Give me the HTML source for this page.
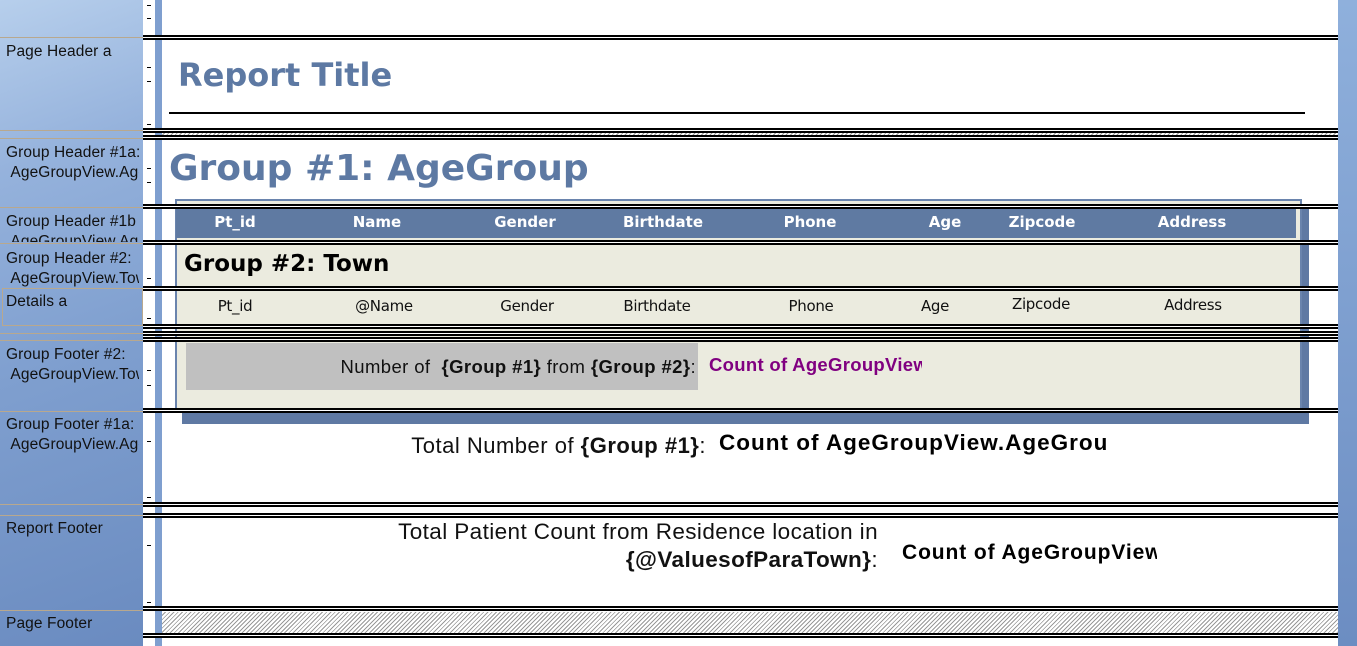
<!DOCTYPE html>
<html><head><meta charset="utf-8"><style>
*{margin:0;padding:0;box-sizing:border-box}
body{width:1357px;height:646px;overflow:hidden;position:relative;background:#fff;font-family:"Liberation Sans",sans-serif}
.a{position:absolute}
.left{left:0;top:0;width:143px;height:646px;background:linear-gradient(160deg,#b7cfec 0%,#95b2dc 25%,#7f9fcf 55%,#6a8bc0 100%)}
.lbl{position:absolute;left:6px;font-size:15.5px;color:#111;white-space:nowrap;width:133px;overflow:hidden;line-height:20px;font-family:"Liberation Sans",sans-serif;letter-spacing:0.1px}
.ld{position:absolute;left:0;width:143px;height:1px;background:#b8a88e}
.ruler{left:143px;top:0;width:12px;height:646px;background:#fff}
.strip{left:155px;top:0;width:7px;height:646px;background:#7f9fcf}
.rb{left:1338px;top:0;width:19px;height:646px;background:linear-gradient(#8fb0dc,#6c8dc2)}
.sep{position:absolute;left:143px;width:1195px;height:5px;border-top:2px solid #000;border-bottom:2px solid #000;background:#fff}
.v{font-family:"DejaVu Sans",sans-serif}
.hd{position:absolute;top:213px;color:#fff;font-weight:bold;font-size:15px;font-family:"DejaVu Sans",sans-serif;text-align:center}
.dt{position:absolute;top:297px;color:#111;font-size:15px;font-family:"DejaVu Sans",sans-serif;text-align:center;letter-spacing:-0.3px}
.hatch{background:repeating-linear-gradient(135deg,#fff 0 2px,#999 2px 3px)}
.tk{position:absolute;left:147px;width:4px;height:1px;background:#000}
</style></head><body>
<div class="a left"></div>
<div class="ld" style="top:37px"></div>
<div class="lbl" style="top:42px">Page Header a</div>
<div class="ld" style="top:130px"></div><div class="ld" style="top:138px"></div>
<div class="lbl" style="top:143px">Group Header #1a:<br>&nbsp;AgeGroupView.AgeGroup</div>
<div class="ld" style="top:207px"></div>
<div class="lbl" style="top:212px;height:30px">Group Header #1b<br>&nbsp;AgeGroupView.Ag</div>
<div class="ld" style="top:243px"></div>
<div class="lbl" style="top:249px;height:39px">Group Header #2:<br>&nbsp;AgeGroupView.Town</div>
<div class="a" style="left:2px;top:288px;width:141px;height:38px;border:1px solid #b8a88e"></div>
<div class="lbl" style="top:292px">Details a</div>
<div class="ld" style="top:333px"></div><div class="ld" style="top:340px"></div>
<div class="lbl" style="top:345px">Group Footer #2:<br>&nbsp;AgeGroupView.Town</div>
<div class="ld" style="top:411px"></div>
<div class="lbl" style="top:415px">Group Footer #1a:<br>&nbsp;AgeGroupView.AgeGroup</div>
<div class="ld" style="top:504px"></div><div class="ld" style="top:515px"></div>
<div class="lbl" style="top:519px">Report Footer</div>
<div class="ld" style="top:610px"></div>
<div class="lbl" style="top:614px">Page Footer</div>

<div class="a ruler"></div>
<div class="a strip"></div>
<div class="a rb"></div>
<div class="tk" style="top:5px"></div><div class="tk" style="top:18px"></div>
<div class="tk" style="top:67px"></div><div class="tk" style="top:81px"></div><div class="tk" style="top:124px"></div>
<div class="tk" style="top:168px"></div><div class="tk" style="top:182px"></div>
<div class="tk" style="top:244px"></div><div class="tk" style="top:278px"></div>
<div class="tk" style="top:318px"></div><div class="tk" style="top:370px"></div><div class="tk" style="top:385px"></div>
<div class="tk" style="top:441px"></div><div class="tk" style="top:497px"></div><div class="tk" style="top:545px"></div><div class="tk" style="top:602px"></div>

<div class="a v" style="left:178px;top:56px;font-size:32px;font-weight:bold;color:#5d79a3">Report Title</div>
<div class="a" style="left:169px;top:112px;width:1136px;height:2px;background:#000"></div>
<div class="a hatch" style="left:162px;top:132px;width:1176px;height:4px"></div>

<div class="a v" style="left:169px;top:148px;font-size:36px;font-weight:bold;color:#5d79a3">Group #1: AgeGroup</div>

<div class="a" style="left:182px;top:206px;width:1127px;height:218px;background:#5f79a3"></div>
<div class="a" style="left:175px;top:199px;width:1127px;height:214px;background:#ebebdf;border:2px solid #6a84ad"></div>
<div class="a" style="left:176px;top:209px;width:1120px;height:29px;background:#5f7aa2"></div>
<div class="hd" style="left:176px;width:118px">Pt_id</div>
<div class="hd" style="left:294px;width:166px">Name</div>
<div class="hd" style="left:460px;width:130px">Gender</div>
<div class="hd" style="left:590px;width:146px">Birthdate</div>
<div class="hd" style="left:726px;width:168px">Phone</div>
<div class="hd" style="left:894px;width:102px">Age</div>
<div class="hd" style="left:996px;width:92px">Zipcode</div>
<div class="hd" style="left:1088px;width:208px">Address</div>

<div class="a v" style="left:184px;top:251px;font-size:23px;font-weight:bold;color:#000">Group #2: Town</div>

<div class="dt" style="left:176px;width:118px">Pt_id</div>
<div class="dt" style="left:294px;width:180px">@Name</div>
<div class="dt" style="left:466px;width:122px">Gender</div>
<div class="dt" style="left:588px;width:138px">Birthdate</div>
<div class="dt" style="left:726px;width:170px">Phone</div>
<div class="dt" style="left:896px;width:78px">Age</div>
<div class="dt" style="left:994px;width:94px;top:295px">Zipcode</div>
<div class="dt" style="left:1088px;width:210px;top:296px">Address</div>

<div class="a" style="left:186px;top:343px;width:512px;height:47px;background:#c0c0c0"></div>
<div class="a" style="left:186px;top:356px;width:512px;text-align:right;font-size:18.5px;color:#111;padding-right:2px;letter-spacing:0.4px">Number of&nbsp; <b>{Group #1}</b> from <b>{Group #2}</b>:</div>
<div class="a" style="left:709px;top:354px;font-size:18.5px;font-weight:bold;color:#800080;width:213px;overflow:hidden;white-space:nowrap;letter-spacing:0.3px">Count of AgeGroupView</div>

<div class="a" style="left:150px;top:433px;width:556px;text-align:right;font-size:22px;color:#111;letter-spacing:0.5px">Total Number of <b>{Group #1}</b>:</div>
<div class="a" style="left:719px;top:430px;width:387px;overflow:hidden;white-space:nowrap;font-size:22.5px;font-weight:bold;color:#000;letter-spacing:1px">Count of AgeGroupView.AgeGroup</div>

<div class="a" style="left:170px;top:518px;width:708px;text-align:right;font-size:22.5px;color:#111;line-height:28px;letter-spacing:0.4px">Total Patient Count from Residence location in<br><b>{@ValuesofParaTown}</b>:</div>
<div class="a" style="left:902px;top:541px;width:255px;overflow:hidden;white-space:nowrap;font-size:21px;font-weight:bold;color:#000;letter-spacing:0.9px">Count of AgeGroupView</div>

<div class="a hatch" style="left:162px;top:612px;width:1176px;height:21px"></div>

<div class="sep" style="top:35px"></div>
<div class="sep" style="top:128px"></div>
<div class="sep" style="top:135px"></div>
<div class="sep" style="top:204px"></div>
<div class="sep" style="top:240px"></div>
<div class="sep" style="top:286px"></div>
<div class="sep" style="top:324px"></div>
<div class="sep" style="top:331px"></div>
<div class="sep" style="top:337px"></div>
<div class="sep" style="top:408px"></div>
<div class="sep" style="top:502px"></div>
<div class="sep" style="top:513px"></div>
<div class="sep" style="top:606px"></div>
<div class="sep" style="top:633px"></div>
</body></html>
